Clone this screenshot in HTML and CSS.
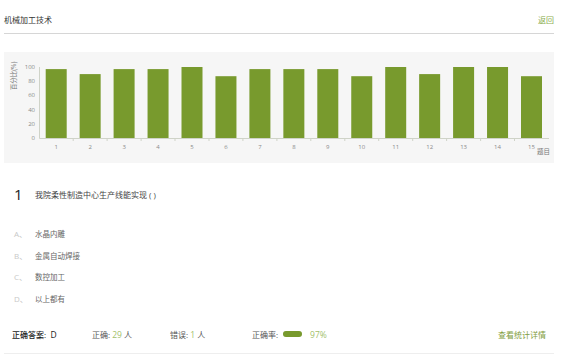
FILE: index.html
```html
<!DOCTYPE html>
<html lang="zh-CN">
<head>
    <meta charset="UTF-8">
    <meta name="viewport" content="width=device-width, initial-scale=1.0">
    <title>机械加工技术</title>
    <link rel="stylesheet" href="styles.css">
</head>
<body>
    <div class="page">
        <!-- Header -->
        <div class="header">
            <span class="header-title">机械加工技术</span>
            <a class="back-link" href="#">返回</a>
        </div>

        <!-- Chart -->
        <div class="chart-panel">
            <svg class="chart" width="550" height="111" viewBox="0 0 550 111">
                <text class="axis-title" transform="translate(12 24) rotate(-90)" text-anchor="middle">百分比(%)</text>

                <g class="y-labels" text-anchor="end">
                    <text x="31" y="17">100</text>
                    <text x="31" y="31.2">80</text>
                    <text x="31" y="45.4">60</text>
                    <text x="31" y="59.6">40</text>
                    <text x="31" y="73.8">20</text>
                    <text x="31" y="88">0</text>
                </g>

                <line class="axis" x1="35.5" y1="15" x2="35.5" y2="86.5"></line>
                <line class="axis" x1="35.5" y1="86.5" x2="545" y2="86.5"></line>
                <g class="ticks">
                    <line x1="69.2" y1="86.5" x2="69.2" y2="89"></line>
                    <line x1="103.1" y1="86.5" x2="103.1" y2="89"></line>
                    <line x1="137.1" y1="86.5" x2="137.1" y2="89"></line>
                    <line x1="171" y1="86.5" x2="171" y2="89"></line>
                    <line x1="205" y1="86.5" x2="205" y2="89"></line>
                    <line x1="238.9" y1="86.5" x2="238.9" y2="89"></line>
                    <line x1="272.9" y1="86.5" x2="272.9" y2="89"></line>
                    <line x1="306.8" y1="86.5" x2="306.8" y2="89"></line>
                    <line x1="340.8" y1="86.5" x2="340.8" y2="89"></line>
                    <line x1="374.7" y1="86.5" x2="374.7" y2="89"></line>
                    <line x1="408.7" y1="86.5" x2="408.7" y2="89"></line>
                    <line x1="442.6" y1="86.5" x2="442.6" y2="89"></line>
                    <line x1="476.6" y1="86.5" x2="476.6" y2="89"></line>
                    <line x1="510.5" y1="86.5" x2="510.5" y2="89"></line>
                </g>

                <!-- bars: value 0..100 mapped to y 86..15 -->
                <g class="bars">
                    <rect x="41.7" y="17.1" width="21" height="68.9"></rect>
                    <rect x="75.65" y="22.1" width="21" height="63.9"></rect>
                    <rect x="109.6" y="17.1" width="21" height="68.9"></rect>
                    <rect x="143.55" y="17.1" width="21" height="68.9"></rect>
                    <rect x="177.5" y="15" width="21" height="71"></rect>
                    <rect x="211.45" y="24.2" width="21" height="61.8"></rect>
                    <rect x="245.4" y="17.1" width="21" height="68.9"></rect>
                    <rect x="279.35" y="17.1" width="21" height="68.9"></rect>
                    <rect x="313.3" y="17.1" width="21" height="68.9"></rect>
                    <rect x="347.25" y="24.2" width="21" height="61.8"></rect>
                    <rect x="381.2" y="15" width="21" height="71"></rect>
                    <rect x="415.15" y="22.1" width="21" height="63.9"></rect>
                    <rect x="449.1" y="15" width="21" height="71"></rect>
                    <rect x="483.05" y="15" width="21" height="71"></rect>
                    <rect x="517" y="24.2" width="21" height="61.8"></rect>
                </g>

                <g class="x-labels" text-anchor="middle">
                    <text x="52.2" y="96.5">1</text>
                    <text x="86.15" y="96.5">2</text>
                    <text x="120.1" y="96.5">3</text>
                    <text x="154.05" y="96.5">4</text>
                    <text x="188" y="96.5">5</text>
                    <text x="221.95" y="96.5">6</text>
                    <text x="255.9" y="96.5">7</text>
                    <text x="289.85" y="96.5">8</text>
                    <text x="323.8" y="96.5">9</text>
                    <text x="357.75" y="96.5">10</text>
                    <text x="391.7" y="96.5">11</text>
                    <text x="425.65" y="96.5">12</text>
                    <text x="459.6" y="96.5">13</text>
                    <text x="493.55" y="96.5">14</text>
                    <text x="527.5" y="96.5">15</text>
                </g>
                <text class="x-title" x="533" y="101.5">题目</text>
            </svg>
        </div>

        <!-- Question -->
        <div class="question">
            <span class="question-no">1</span>
            <span class="question-text">我院柔性制造中心生产线能实现 ( )</span>
        </div>

        <ul class="options">
            <li><span class="option-key">A、</span><span class="option-text">水晶内雕</span></li>
            <li><span class="option-key">B、</span><span class="option-text">金属自动焊接</span></li>
            <li><span class="option-key">C、</span><span class="option-text">数控加工</span></li>
            <li><span class="option-key">D、</span><span class="option-text">以上都有</span></li>
        </ul>

        <!-- Stats -->
        <div class="stats">
            <span class="stat stat-answer"><b>正确答案:</b>&nbsp; D</span>
            <span class="stat stat-right">正确: <em>29</em> 人</span>
            <span class="stat stat-wrong">错误: <em>1</em> 人</span>
            <span class="stat stat-rate">正确率:
                <span class="rate-bar"><span class="rate-fill" style="width: 97%"></span></span>
                <em>97%</em>
            </span>
            <a class="detail-link" href="#">查看统计详情</a>
        </div>
    </div>
</body>
</html>
```

FILE: styles.css
```css
/* General Styling */
body {
    margin: 0;
    padding: 0;
    background: #fff;
    color: #444;
    font-family: 'Open Sans', 'Noto Sans CJK SC', sans-serif;
    font-size: 8px;
}

.page {
    width: 550px;
    margin-left: 4px;
}

a {
    text-decoration: none;
}

/* Header */
.header {
    height: 34px;
    padding-top: 5px;
    box-sizing: border-box;
    display: flex;
    justify-content: space-between;
    align-items: center;
    border-bottom: 1px solid #d6d6d6;
}

.header-title {
    color: #333;
    font-size: 8px;
}

.back-link {
    color: #8cae4f;
    font-size: 8px;
}

/* Chart */
.chart-panel {
    margin-top: 18px;
    height: 111px;
    background: #f6f6f6;
}

.chart {
    display: block;
}

.chart text {
    font-family: 'Open Sans', 'Noto Sans CJK SC', sans-serif;
    font-size: 6px;
    fill: #8a8a8a;
}

.chart .axis-title,
.chart .x-title {
    font-size: 6.5px;
    fill: #777;
}

.axis,
.ticks line {
    stroke: #cfd3c8;
    stroke-width: 1;
}

.bars rect {
    fill: #789a2d;
}

/* Question */
.question {
    display: flex;
    align-items: center;
    margin-top: 21px;
    padding-left: 10px;
}

.question-no {
    width: 21px;
    font-size: 15px;
    color: #222;
}

.question-text {
    color: #444;
}

.options {
    list-style: none;
    margin: 19px 0 0;
    padding: 0 0 0 10px;
}

.options li {
    display: flex;
    align-items: center;
    height: 21.5px;
}

.option-key {
    width: 21px;
    color: #c8c8c8;
}

.option-text {
    color: #666;
    font-size: 7.5px;
}

/* Stats */
.stats {
    display: flex;
    align-items: center;
    height: 38px;
    margin-top: 6px;
    padding: 0 8px;
    border-bottom: 1px solid #eee;
    color: #555;
}

.stats em {
    font-style: normal;
    font-size: 8.5px;
    color: #a3bf6c;
}

.stat-answer {
    width: 80px;
    color: #222;
    font-size: 8.5px;
}

.stat-answer b {
    font-size: 8px;
    font-weight: 500;
}

.stat-right {
    width: 78px;
}

.stat-wrong {
    width: 82px;
}

.stat-rate {
    display: flex;
    align-items: center;
}

.rate-bar {
    width: 19px;
    height: 6px;
    margin: 0 8px 0 5px;
    border-radius: 3px;
    background: #e4e4e4;
    overflow: hidden;
}

.rate-fill {
    display: block;
    height: 100%;
    background: #789a2d;
}

.detail-link {
    margin-left: auto;
    color: #7f9c3d;
}
```
